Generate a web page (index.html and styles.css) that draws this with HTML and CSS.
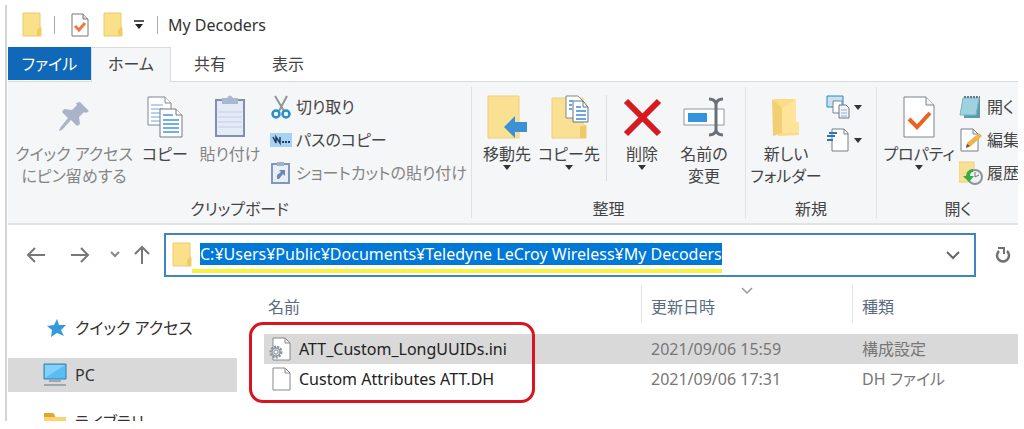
FILE: index.html
```html
<!DOCTYPE html>
<html lang="ja">
<head>
    <meta charset="UTF-8">
    <meta name="viewport" content="width=device-width, initial-scale=1.0">
    <title>My Decoders</title>
    <link rel="stylesheet" href="styles.css">
</head>
<body>
    <div class="window">
        <!-- Title bar -->
        <header class="titlebar">
            <svg class="folder" width="20" height="26" viewBox="0 0 20 26"><path d="M1 1h17v15h1v8H1z" fill="#fbe08a" stroke="#ecca6c"/><path d="M15 24v-6l4-4v10z" fill="#f0cc62"/></svg>
            <span class="bar"></span>
            <svg class="check" width="18" height="24" viewBox="0 0 18 24"><path d="M1 1h11l5 5v17H1z" fill="#fff" stroke="#777"/><path d="M12 1v5h5" fill="#ddd" stroke="#777"/><path d="M4 13l4 4 6-7" fill="none" stroke="#ec7a42" stroke-width="3"/></svg>
            <svg class="folder" width="20" height="26" viewBox="0 0 20 26"><path d="M1 1h17v15h1v8H1z" fill="#fbe08a" stroke="#ecca6c"/><path d="M15 24v-6l4-4v10z" fill="#f0cc62"/></svg>
            <svg class="more" width="12" height="10" viewBox="0 0 12 10"><path d="M1 1h10" stroke="#222" stroke-width="1.5"/><path d="M2 4h8L6 9z" fill="#222"/></svg>
            <span class="bar"></span>
            <h1>My Decoders</h1>
        </header>

        <!-- Ribbon tabs -->
        <nav class="tabs">
            <button class="tab file">ファイル</button>
            <button class="tab active">ホーム</button>
            <button class="tab">共有</button>
            <button class="tab">表示</button>
        </nav>

        <!-- Ribbon -->
        <div class="ribbon">
            <section class="group clipboard">
                <div class="tools">
                    <button class="big wide disabled">
                        <svg width="40" height="44" viewBox="0 0 40 44"><path d="M26 7l9 9-3 2-2-1-5 5 1 7-3 2-6-6-9 10-3 1 1-3 8-10-6-6 2-3 8 1 5-5-1-2z" fill="#a9b5c6"/></svg>
                        <span>クイック アクセス<br>にピン留めする</span>
                    </button>
                    <button class="big narrow">
                        <svg width="40" height="44" viewBox="0 0 40 44"><path d="M3 2h17l6 6v22H3z" fill="#fff" stroke="#808890"/><path d="M20 2v6h6" fill="#fff" stroke="#808890"/><path d="M6 10h12M6 14h12M6 18h12M6 22h12M6 26h12" stroke="#b5d2f1" stroke-width="2"/><path d="M15 14h16l6 6v22H15z" fill="#fff" stroke="#707b88"/><path d="M31 14v6h6" fill="#fff" stroke="#707b88"/><path d="M18 20h10M18 25h16M18 29h16M18 33h16M18 37h16" stroke="#72aee8" stroke-width="2"/></svg>
                        <span>コピー</span>
                    </button>
                    <button class="big disabled">
                        <svg width="40" height="44" viewBox="0 0 40 44"><path d="M6 5h28v36H6z" fill="#e4ebf7" stroke="#8390ad" stroke-width="2"/><path d="M12 3h5q3-5 6 0h5v6H12z" fill="#a9b8d2"/><path d="M8 17h24M8 22h24M8 27h24M8 32h24" stroke="#c2cfe8"/></svg>
                        <span>貼り付け</span>
                    </button>
                    <div class="list">
                        <button class="small">
                            <svg width="22" height="24" viewBox="0 0 22 24"><path d="M5 1l9 15M17 1L9 16" stroke="#8d959d" stroke-width="2"/><circle cx="6" cy="19" r="3.5" fill="none" stroke="#278fc4" stroke-width="2.5"/><circle cx="16" cy="19" r="3.5" fill="none" stroke="#278fc4" stroke-width="2.5"/></svg>
                            <span>切り取り</span>
                        </button>
                        <button class="small">
                            <svg width="22" height="24" viewBox="0 0 22 24"><path d="M0 5h22v14H0z" fill="#a8d2f5"/><path d="M3 9l3 6V9l4 6V9" fill="none" stroke="#1f3d5c" stroke-width="1.5"/><path d="M12 14h2M15 14h2M18 14h2" stroke="#1f3d5c" stroke-width="2"/></svg>
                            <span>パスのコピー</span>
                        </button>
                        <button class="small disabled">
                            <svg width="22" height="24" viewBox="0 0 22 24"><path d="M2 3h17v19H2z" fill="#e9eff8" stroke="#8298b8" stroke-width="2"/><path d="M7 1h7v4H7z" fill="#9fb1cb"/><path d="M7 18v-4l4-3-2-2h6v6l-2-2-4 5z" fill="#6e86b0"/></svg>
                            <span>ショートカットの貼り付け</span>
                        </button>
                    </div>
                </div>
                <h2>クリップボード</h2>
            </section>

            <section class="group organize">
                <div class="tools">
                    <button class="big narrow">
                        <svg width="40" height="44" viewBox="0 0 40 44"><path d="M1 1h31v42H1z" fill="#fae092" stroke="#f0d078"/><path d="M17 32l11-11v6h12v10H28v6z" fill="#3a91d6"/></svg>
                        <span>移動先</span><i class="arrow"></i>
                    </button>
                    <button class="big narrow">
                        <svg width="40" height="44" viewBox="0 0 40 44"><path d="M3 3h31v27h3v13H3z" fill="#fae092" stroke="#f0d078"/><path d="M31 43V31h6v12z" fill="#edc968"/><path d="M17 1h12l5 5v17H17z" fill="#fff" stroke="#7d8791"/><path d="M24 6h10l5 6v15H24z" fill="#fff" stroke="#65717e"/><path d="M34 6v6h5" fill="none" stroke="#65717e"/><path d="M27 12h5M27 16h10M27 20h10M27 24h10M20 6h4M20 10h3M20 14h3" stroke="#68a6e4" stroke-width="2"/></svg>
                        <span>コピー先</span><i class="arrow"></i>
                    </button>
                    <span class="divider"></span>
                    <button class="big narrow">
                        <svg width="40" height="44" viewBox="0 0 40 44"><path d="M4 6l33 33M37 6L4 39" stroke="#d71920" stroke-width="6"/></svg>
                        <span>削除</span><i class="arrow"></i>
                    </button>
                    <button class="big narrow">
                        <svg width="42" height="44" viewBox="0 0 42 44"><path d="M1 14h40v16H1z" fill="#fff" stroke="#8e959c"/><path d="M5 18h19v9H5z" fill="#3493df"/><path d="M26 4q6 0 7 5 1-5 7-5M33 8v28M26 40q6 0 7-5 1 5 7 5" fill="none" stroke="#68717a" stroke-width="3"/></svg>
                        <span>名前の<br>変更</span>
                    </button>
                </div>
                <h2>整理</h2>
            </section>

            <section class="group new">
                <div class="tools">
                    <button class="big">
                        <svg width="40" height="44" viewBox="0 0 40 44"><path d="M8 4h22v23h3v13L12 41z" fill="#fbdc83"/><path d="M6 4l10 9v25l-9 3z" fill="#f3cf73"/><path d="M16 13l14-9v23h3v11H16z" fill="#fee49a"/></svg>
                        <span>新しい<br>フォルダー</span>
                    </button>
                    <div class="list">
                        <button class="small" aria-label="新しいアイテム">
                            <svg width="24" height="24" viewBox="0 0 24 24"><path d="M1 1h16v11H1z" fill="#c7e2f5" stroke="#3586b8"/><path d="M7 6h9v12H7z" fill="#fff" stroke="#76838f"/><path d="M13 10h7l3 3v10H13z" fill="#eef4fa" stroke="#707780"/><path d="M15 15h6M15 18h6M15 21h6" stroke="#8eb0d4"/></svg><i class="arrow"></i>
                        </button>
                        <button class="small" aria-label="ショートカット">
                            <svg width="24" height="24" viewBox="0 0 24 24"><path d="M6 1h12l4 4v18H6z" fill="#fff" stroke="#777f88"/><path d="M18 1v5h4" fill="none" stroke="#777f88"/><path d="M3 5h8M1 8h8M1 12h6" stroke="#2878b5" stroke-width="2"/></svg><i class="arrow"></i>
                        </button>
                    </div>
                </div>
                <h2>新規</h2>
            </section>

            <section class="group open">
                <div class="tools">
                    <button class="big">
                        <svg width="40" height="44" viewBox="0 0 40 44"><path d="M5 2h22l8 8v32H5z" fill="#fff" stroke="#7c848c"/><path d="M27 2v8h8" fill="#f2f2f2" stroke="#7c848c"/><path d="M10 24l8 8 13-14" fill="none" stroke="#e86424" stroke-width="4"/></svg>
                        <span>プロパティ</span><i class="arrow"></i>
                    </button>
                    <div class="list">
                        <button class="small">
                            <svg width="24" height="24" viewBox="0 0 24 24"><path d="M5 3h16v20H5z" fill="#5d99ac"/><path d="M4 3h16l-3 17H1z" fill="#9ed2de" stroke="#79b6c6"/><path d="M5 2h16" stroke="#687983" stroke-width="2" stroke-dasharray="2 1"/></svg>
                            <span>開く</span>
                        </button>
                        <button class="small">
                            <svg width="24" height="24" viewBox="0 0 24 24"><path d="M2 1h12l5 5v17H2z" fill="#fff" stroke="#777f88"/><path d="M14 1v5h5" fill="none" stroke="#777f88"/><path d="M7 20l1-5L20 5l3 3-11 10z" fill="#f3b34c"/><path d="M7 20l1-4 3 2z" fill="#5d5042"/></svg>
                            <span>編集</span>
                        </button>
                        <button class="small">
                            <svg width="24" height="24" viewBox="0 0 24 24"><path d="M0 1h15v20H0z" fill="#fae092" stroke="#eece77"/><circle cx="16" cy="16" r="7" fill="#eef1f3" stroke="#8c9499" stroke-width="2"/><path d="M16 11v5l4-2" fill="none" stroke="#777"/><path d="M14 8q-7 1-7 7H4l6 6 5-6h-4q0-4 3-4z" fill="#36ac45"/></svg>
                            <span>履歴</span>
                        </button>
                    </div>
                </div>
                <h2>開く</h2>
            </section>
        </div>

        <!-- Address bar -->
        <div class="navbar">
            <button aria-label="戻る"><svg width="20" height="20" viewBox="0 0 20 20"><path d="M19 10H2M9 3l-7 7 7 7" fill="none" stroke="#777" stroke-width="2"/></svg></button>
            <button aria-label="進む"><svg width="20" height="20" viewBox="0 0 20 20"><path d="M1 10h17M11 3l7 7-7 7" fill="none" stroke="#777" stroke-width="2"/></svg></button>
            <button class="recent" aria-label="最近表示した場所"><svg width="10" height="8" viewBox="0 0 10 8"><path d="M1 1l4 4 4-4" fill="none" stroke="#888" stroke-width="2"/></svg></button>
            <button aria-label="上へ"><svg width="20" height="20" viewBox="0 0 20 20"><path d="M10 19V2M3 9l7-7 7 7" fill="none" stroke="#777" stroke-width="2"/></svg></button>
            <div class="address">
                <svg class="folder" width="20" height="26" viewBox="0 0 20 26"><path d="M1 1h17v15h1v8H1z" fill="#fbe08a" stroke="#ecca6c"/><path d="M15 24v-6l4-4v10z" fill="#f0cc62"/></svg>
                <div class="path">
                    <input type="text" aria-label="アドレス" value="C:¥Users¥Public¥Documents¥Teledyne LeCroy Wireless¥My Decoders">
                </div>
                <button class="drop" aria-label="以前の場所"><svg width="14" height="10" viewBox="0 0 14 10"><path d="M1 2l6 6 6-6" fill="none" stroke="#666" stroke-width="2"/></svg></button>
            </div>
            <button class="refresh" aria-label="最新の情報に更新"><svg width="18" height="20" viewBox="0 0 18 20"><path d="M13 6a6 6 0 1 1-8 0" fill="none" stroke="#707070" stroke-width="2.5"/><path d="M4 3h6v6" fill="none" stroke="#707070" stroke-width="2"/></svg></button>
        </div>

        <div class="content">
            <!-- Navigation pane -->
            <aside class="sidebar">
                <a href="#quick">
                    <svg width="24" height="22" viewBox="0 0 24 22"><path d="M14 2l2 6 7 0-5 5 3 6-7-3-6 4 1-7-5-4 7-1z" fill="#319bdd"/></svg>
                    <span>クイック アクセス</span>
                </a>
                <a href="#pc" class="selected">
                    <svg width="24" height="24" viewBox="0 0 24 24"><path d="M1 1h22v15H1z" fill="#58bdf5" stroke="#327ead"/><path d="M2 2h20L2 15z" fill="#83d1fb"/><path d="M6 18h12" stroke="#9da7ad" stroke-width="2"/><path d="M1 22h22" stroke="#9da7ad" stroke-width="2"/></svg>
                    <span>PC</span>
                </a>
                <a href="#library">
                    <svg width="24" height="22" viewBox="0 0 24 22"><path d="M1 2h10l2 4h10v14H1z" fill="#fbd56b"/><path d="M1 2h9l2 4H1z" fill="#e3a42f"/></svg>
                    <span>ライブラリ</span>
                </a>
            </aside>

            <!-- File list -->
            <main class="files">
                <table>
                    <thead>
                        <tr>
                            <th class="name">名前</th>
                            <th class="date">更新日時<svg class="sort" width="12" height="8" viewBox="0 0 12 8"><path d="M1 1l5 5 5-5" fill="none" stroke="#999" stroke-width="1.5"/></svg></th>
                            <th class="type">種類</th>
                        </tr>
                    </thead>
                    <tbody>
                        <tr class="selected">
                            <td class="name"><div>
                                <svg width="24" height="24" viewBox="0 0 24 24"><path d="M5 1h12l5 5v17H5z" fill="#fff" stroke="#888"/><path d="M17 1v5h5" fill="none" stroke="#888"/><circle cx="8" cy="15" r="5" fill="#ddd" stroke="#8d9499" stroke-width="3" stroke-dasharray="2 1"/><circle cx="8" cy="15" r="4" fill="#d8dcdf" stroke="#8d9499"/><circle cx="8" cy="15" r="2" fill="#fff" stroke="#8d9499"/></svg>
                                <span>ATT_Custom_LongUUIDs.ini</span></div></td>
                            <td>2021/09/06 15:59</td>
                            <td>構成設定</td>
                        </tr>
                        <tr>
                            <td class="name"><div>
                                <svg width="24" height="24" viewBox="0 0 24 24"><path d="M5 1h12l5 5v17H5z" fill="#fff" stroke="#888"/><path d="M17 1v5h5" fill="none" stroke="#888"/></svg>
                                <span>Custom Attributes ATT.DH</span></div></td>
                            <td>2021/09/06 17:31</td>
                            <td>DH ファイル</td>
                        </tr>
                    </tbody>
                </table>
                <div class="callout"></div>
            </main>
        </div>
    </div>
</body>
</html>
```
FILE: styles.css
```css
* {
    box-sizing: border-box;
}

body {
    margin: 0;
    padding: 5px 6px 8px 5px;
    height: 100vh;
    background-color: #fff;
    color: #444;
    font-family: "Noto Sans", "Noto Sans CJK JP", sans-serif;
    font-size: 16px;
    line-height: 22px;
    font-feature-settings: "palt"; /* proportional kana */
}

button, input {
    font: inherit;
    font-feature-settings: inherit;
    color: inherit;
    background: none;
    border: none;
    padding: 0;
    margin: 0;
}

svg {
    display: block;
    flex: none;
}

h1, h2 {
    margin: 0;
    font-size: 16px;
    font-weight: normal;
}

.window {
    height: 100%;
    display: flex;
    flex-direction: column;
    overflow: hidden;
    border-left: 2px solid #d4d4d4;
    padding-left: 1px;
}

/* Title bar */
.titlebar {
    display: flex;
    align-items: center;
    flex: none;
    height: 40px;
    margin-bottom: 2px;
    padding: 0 14px;
}

.titlebar h1 {
    color: #333;
}

.bar {
    width: 1px;
    height: 18px;
    margin: 0 10px 0 12px;
    background-color: #aaa;
}

.titlebar .check {
    margin: 0 14px 0 6px;
}

.titlebar .more {
    margin-left: 10px;
}

/* Tabs */
.tabs {
    display: flex;
    flex: none;
    height: 35px;
    border-bottom: 1px solid #dadbdc;
}

.tab {
    width: 78px;
    height: 35px;
    padding-bottom: 2px;
}

.tab.file {
    width: 83px;
    height: 33px;
    padding: 0;
    background-color: #0f68b8;
    color: #fff;
}

.tab.active {
    width: 80px;
    background-color: #f5f6f7;
    border: 1px solid #dadbdc;
    border-bottom: none;
}

/* Ribbon */
.ribbon {
    display: flex;
    flex: none;
    height: 143px;
    background-color: #f5f6f7;
    border-bottom: 2px solid #e2e3e4;
    white-space: nowrap;
    overflow: hidden;
}

.group {
    display: flex;
    flex-direction: column;
    flex: none;
    margin: 5px 0;
    border-right: 1px solid #e0e1e2;
}

.group h2 {
    text-align: center;
}

.tools {
    display: flex;
    flex: none;
    height: 111px;
    padding-top: 8px;
}

.clipboard {
    width: 464px;
}

.organize {
    width: 274px;
}

.organize .tools {
    padding-left: 4px;
}

.new {
    width: 131px;
}

.open {
    flex: 1 0 0;
    border-right: none;
}

.open .tools {
    padding-left: 2px;
}

.open h2 {
    padding-left: 20px;
}

.big {
    display: flex;
    flex-direction: column;
    align-items: center;
    flex: none;
    width: 80px;
}

.big span {
    margin-top: 4px;
}

.wide {
    width: 132px;
}

.narrow {
    width: 62px;
}

.clipboard .narrow {
    width: 50px;
}

.disabled {
    color: #858585;
}

.arrow {
    border: 4px solid transparent;
    border-top: 5px solid #333;
    border-bottom: none;
}

.divider {
    height: 86px;
    margin: 0 4px 0 6px;
    border-left: 1px solid #dcdddf;
}

.list {
    display: flex;
    flex-direction: column;
    gap: 9px;
}

.small {
    display: flex;
    align-items: center;
    height: 24px;
    gap: 4px;
}

/* Address bar */
.navbar {
    display: flex;
    align-items: center;
    flex: none;
    height: 60px;
    padding-left: 18px;
    gap: 24px;
}

.navbar .recent {
    margin: 0 -12px 0 -4px;
}

.address {
    display: flex;
    align-items: center;
    flex: 1;
    height: 44px;
    margin-left: -12px;
    padding: 0 14px 0 6px;
    border: 2px solid #3f85c0;
}

.path {
    height: 30px;
    margin-top: 6px;
    padding-left: 8px;
    border-bottom: 4px solid #f8f33a;
}

.path input {
    display: block;
    height: 22px;
    field-sizing: content;
    background-color: #0078d7;
    color: #fff;
}

.drop {
    margin-left: auto;
}

.refresh {
    margin: 0 6px 0 -6px;
}

/* Navigation pane */
.content {
    display: flex;
    flex: 1;
    min-height: 0;
}

.sidebar {
    flex: none;
    width: 229px;
    padding-top: 26px;
}

.sidebar a {
    display: flex;
    align-items: center;
    height: 34px;
    margin-bottom: 13px;
    padding-left: 35px;
    gap: 8px;
    color: #333;
    text-decoration: none;
}

.sidebar .selected {
    background-color: #d9d9d9;
}

/* File list */
.files {
    position: relative;
    flex: 1;
    padding-left: 27px;
}

table {
    width: 100%;
    table-layout: fixed;
    border-collapse: collapse;
}

th {
    position: relative;
    height: 49px;
    padding: 0 0 6px 10px;
    color: #5b6b80;
    font-weight: normal;
    text-align: left;
}

th.name {
    width: 377px;
    padding-left: 4px;
}

th.date {
    width: 211px;
}

.date, .type {
    background: linear-gradient(#e2e2e2, #e2e2e2) left top / 1px 38px no-repeat;
}

.sort {
    position: absolute;
    left: 100px;
    top: 2px;
}

td {
    height: 30px;
    padding: 0 0 0 10px;
    color: #777;
}

td.name {
    padding-left: 4px;
    color: #222;
}

td.name div {
    display: flex;
    align-items: center;
    gap: 7px;
}

tr.selected {
    background-color: #d9d9d9;
}

/* Red frame around the two files */
.callout {
    position: absolute;
    left: 12px;
    top: 37px;
    width: 286px;
    height: 81px;
    border: 3px solid #d9141e;
    border-radius: 14px;
}
```
